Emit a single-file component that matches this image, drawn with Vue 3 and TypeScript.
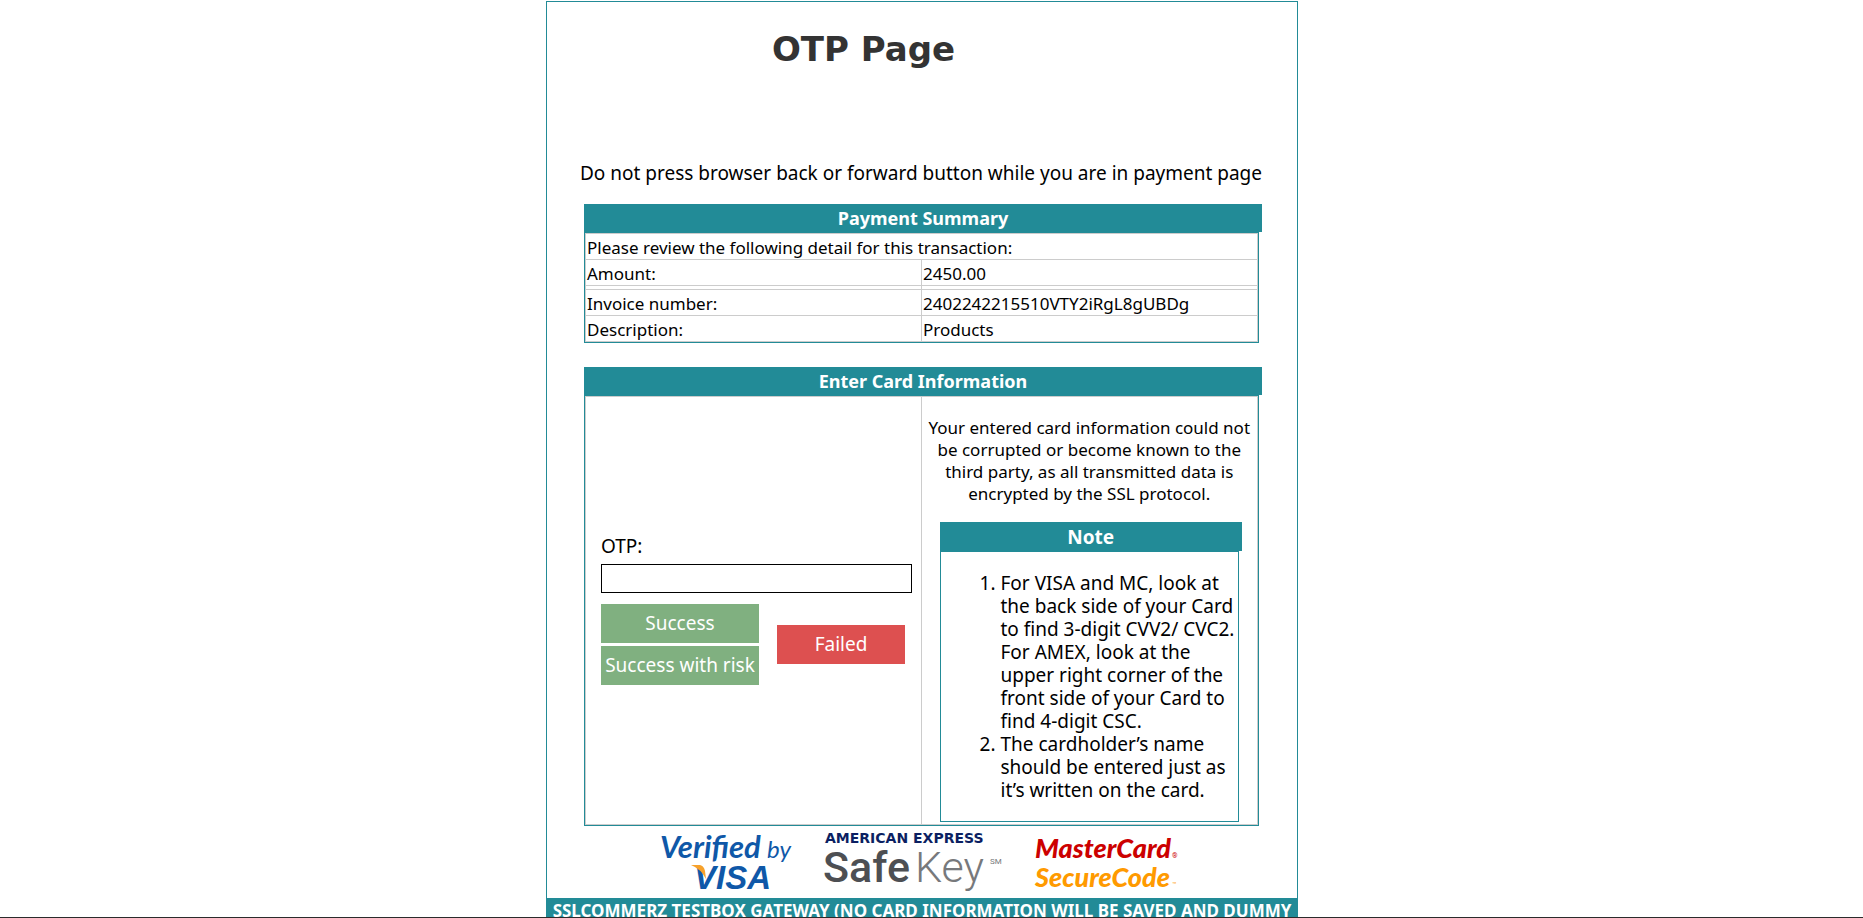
<script setup lang="ts">
import { ref } from 'vue'

interface SummaryRow {
  label: string
  value: string
}

const rows: SummaryRow[] = [
  { label: 'Amount:', value: '2450.00' },
  { label: '', value: '' },
  { label: 'Invoice number:', value: '2402242215510VTY2iRgL8gUBDg' },
  { label: 'Description:', value: 'Products' },
]

const notes: string[] = [
  'For VISA and MC, look at the back side of your Card to find 3-digit CVV2/ CVC2. For AMEX, look at the upper right corner of the front side of your Card to find 4-digit CSC.',
  'The cardholder’s name should be entered just as it’s written on the card.',
]

const otp = ref('')
</script>

<template>
  <div class="page">
    <main class="sheet">
      <h1 class="title">OTP Page</h1>
      <p class="warning">Do not press browser back or forward button while you are in payment page</p>

      <section class="section">
        <h2 class="bar">Payment Summary</h2>
        <div class="frame">
          <table class="summary">
            <tbody>
              <tr>
                <td colspan="2">Please review the following detail for this transaction:</td>
              </tr>
              <tr v-for="(row, i) in rows" :key="i" :class="{ spacer: !row.label }">
                <td>{{ row.label }}</td>
                <td>{{ row.value }}</td>
              </tr>
            </tbody>
          </table>
        </div>
      </section>

      <section class="section">
        <h2 class="bar">Enter Card Information</h2>
        <div class="frame">
          <div class="card">
            <form class="entry" @submit.prevent>
              <label for="otp">OTP:</label>
              <input id="otp" v-model="otp" type="text" autocomplete="off" />
              <div class="actions">
                <div class="stack">
                  <button type="submit" class="ok">Success</button>
                  <button type="submit" class="ok">Success with risk</button>
                </div>
                <button type="button" class="fail">Failed</button>
              </div>
            </form>
            <div class="info">
              <p class="assurance">
                Your entered card information could not be corrupted or become known to the third party, as all
                transmitted data is encrypted by the SSL protocol.
              </p>
              <div class="note">
                <h3 class="bar note-bar">Note</h3>
                <ol class="note-list">
                  <li v-for="note in notes" :key="note">{{ note }}</li>
                </ol>
              </div>
            </div>
          </div>
        </div>
      </section>

      <div class="logos">
        <svg class="logo" width="132" height="62" viewBox="0 0 132 62" role="img" aria-label="Verified by VISA">
          <text class="vbv-main" x="0" y="28">Verified</text>
          <text class="vbv-by" x="107" y="28">by</text>
          <text class="vbv-visa" x="34" y="59">VISA</text>
          <path d="M31 35H40Q44 36 45 41L46 49Q41 39 31 35Z" fill="#f7a12b" />
        </svg>
        <svg class="logo" width="180" height="62" viewBox="0 0 180 62" role="img" aria-label="American Express SafeKey">
          <text class="amex" x="2" y="13">AMERICAN EXPRESS</text>
          <text class="safe" x="0" y="52">Safe</text>
          <text class="key" x="92" y="52">Key</text>
          <text class="mark" x="167" y="34">SM</text>
        </svg>
        <svg class="logo" width="150" height="62" viewBox="0 0 150 62" role="img" aria-label="MasterCard SecureCode">
          <text class="mc" x="1" y="28">MasterCard</text>
          <text class="mc-mark" x="138" y="28">®</text>
          <text class="mc orange" x="1" y="57">SecureCode</text>
          <text class="mc-mark orange" x="138" y="57">™</text>
        </svg>
      </div>

      <footer class="footer">
        SSLCOMMERZ TESTBOX GATEWAY (NO CARD INFORMATION WILL BE SAVED AND DUMMY
      </footer>
    </main>
  </div>
</template>

<style>
body {
  margin: 0;
  background: #fff;
}
</style>

<style scoped>
.page {
  box-sizing: border-box;
  height: 100vh;
  overflow: hidden;
  padding: 1px 19px 0 0;
  border-bottom: 1px solid #2b2b2b;
  font-family: 'Noto Sans', sans-serif;
  color: #000;
}
.sheet {
  box-sizing: border-box;
  max-width: 752px;
  margin: 0 auto;
  border: 1px solid #228b97;
}
.title {
  margin: 0;
  padding: 24px 117px 0 0;
  font-family: 'DejaVu Sans', sans-serif;
  font-size: 34px;
  line-height: 46px;
  font-weight: 700;
  text-align: center;
  color: #333;
}
.warning {
  margin: 88px 0 18px;
  padding-right: 2px;
  font-size: 19px;
  line-height: 26px;
  text-align: center;
}
.section {
  margin: 0 38px 24px 37px;
}
.bar {
  margin: 0 -3px 0 0;
  padding-top: 1px;
  background: #228b97;
  color: #fff;
  font-size: 18px;
  line-height: 27px;
  font-weight: 700;
  text-align: center;
}
.frame {
  border: 1px solid #228b97;
}
.summary {
  width: 100%;
  table-layout: fixed;
  border-collapse: collapse;
  font-size: 17px;
  line-height: 23px;
}
.summary td {
  padding: 2px 1px 0;
  border: 1px solid #ccc;
}
.summary .spacer td {
  height: 1px;
  line-height: 1px;
}
.card {
  display: grid;
  grid-template-columns: 1fr 1fr;
  border: 1px solid #ccc;
}
.entry {
  display: flex;
  flex-direction: column;
  justify-content: center;
  padding: 0 9px 4px 15px;
  border-right: 1px solid #ccc;
  font-size: 19px;
}
.entry label {
  line-height: 26px;
  margin-bottom: 5px;
}
.entry input {
  box-sizing: border-box;
  width: 100%;
  height: 29px;
  padding: 0 4px;
  border: 1px solid #000;
  border-radius: 0;
  font: inherit;
}
.actions {
  display: flex;
  align-items: center;
  gap: 18px;
  margin-top: 11px;
}
.stack {
  display: flex;
  flex-direction: column;
  gap: 3px;
  width: 158px;
}
button {
  height: 39px;
  padding: 0;
  border: 0;
  font: inherit;
  color: #fff;
  white-space: nowrap;
}
.ok {
  background: #80b080;
}
.fail {
  width: 128px;
  background: #dd5050;
}
.info {
  padding: 20px 18px 2px;
}
.assurance {
  margin: 0 -14px 17px;
  font-size: 17px;
  line-height: 22px;
  text-align: center;
}
.note-bar {
  font-size: 19px;
  line-height: 28px;
}
.note-list {
  margin: 0;
  padding: 20px 2px 19px 60px;
  border: 1px solid #228b97;
  font-size: 19px;
  line-height: 23px;
}
.logos {
  display: flex;
  justify-content: center;
  gap: 31px;
  margin-top: -20px;
  padding-bottom: 6px;
}
.logo {
  display: block;
  overflow: visible;
}
.vbv-main {
  font: italic 700 31px Lato, sans-serif;
  fill: #0f58a8;
}
.vbv-by {
  font: italic 400 24px Lato, sans-serif;
  fill: #0f58a8;
}
.vbv-visa {
  font: italic 700 33px 'Liberation Sans', sans-serif;
  fill: #0f58a8;
}
.amex {
  font: 700 14px 'DejaVu Sans', sans-serif;
  fill: #0b1f62;
}
.safe {
  font: 500 43px Roboto, sans-serif;
  fill: #4d4f53;
}
.key {
  font: 300 43px Roboto, sans-serif;
  fill: #77797c;
}
.mark {
  font: 400 8px Roboto, sans-serif;
  fill: #77797c;
}
.mc {
  font: italic 900 27px Lato, sans-serif;
  fill: #c00;
}
.mc-mark {
  font: 400 7px Roboto, sans-serif;
  fill: #c00;
}
.orange {
  fill: #ff9a00;
}
.footer {
  padding: 0 4px;
  background: #228b97;
  color: #fff;
  font-size: 17px;
  line-height: 25px;
  font-weight: 700;
  text-align: center;
  white-space: nowrap;
}
</style>
